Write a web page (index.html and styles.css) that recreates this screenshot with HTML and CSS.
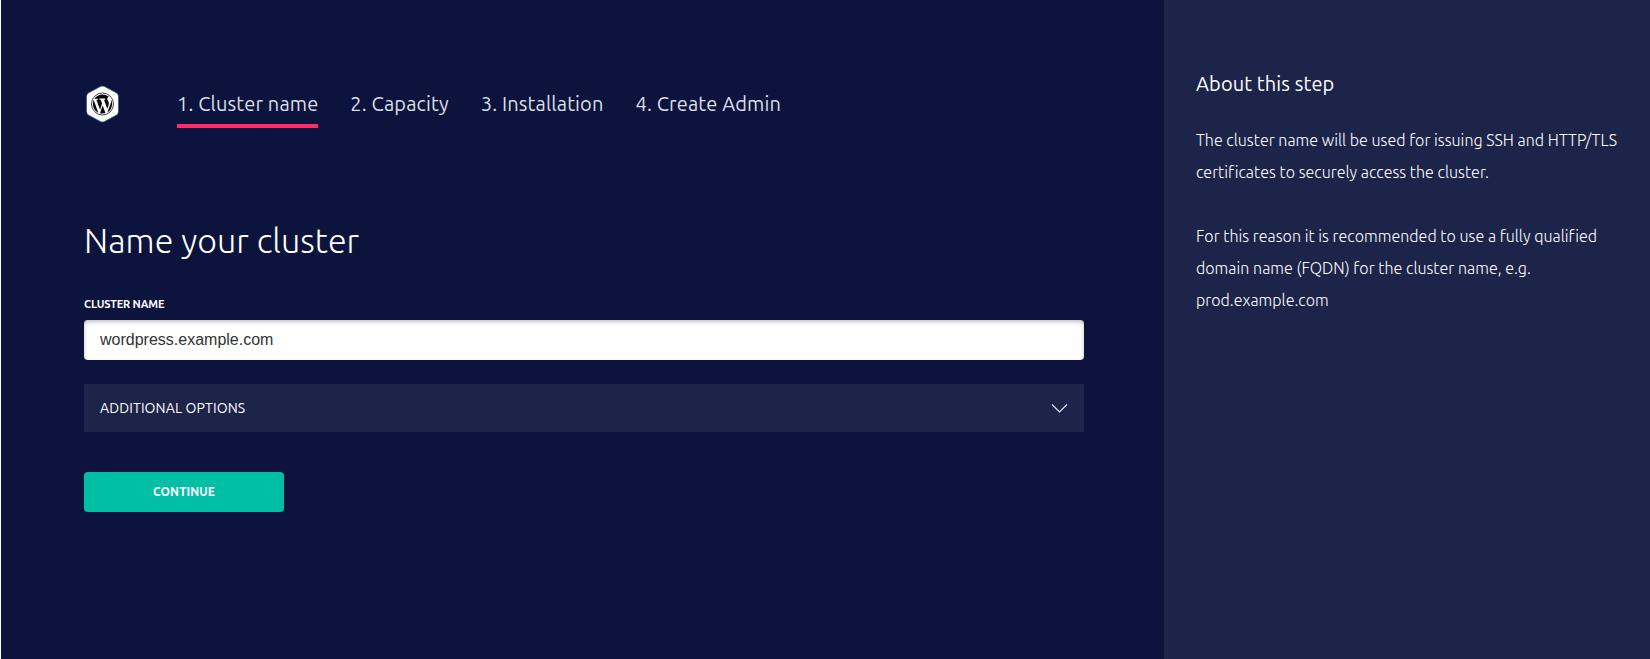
FILE: index.html
```html
<!DOCTYPE html>
<html lang="en">
<head>
<meta charset="utf-8">
<title>Name your cluster</title>
<link rel="stylesheet" href="styles.css">
</head>
<body>
<div class="installer">
  <main class="content">
    <header class="header">
      <svg class="logo" width="37" height="38" viewBox="0 0 37 38">
        <g transform="translate(.5 0)">
          <path class="logo-hex" d="M15.8 1.6Q18 .4 20.2 1.6L31.8 7.8Q34 9.1 34 11.5V26.5Q34 28.9 31.8 30.2L20.2 36.4Q18 37.6 15.8 36.4L4.2 30.2Q2 28.9 2 26.5V11.5Q2 9.1 4.2 7.8Z"/>
          <circle class="logo-ring" cx="18" cy="19" r="11"/>
          <g class="logo-mark" transform="translate(7.2 8.2) scale(1.08)">
            <path d="M7.78 15.37L4.37 6.22c.55-.02 1.17-.08 1.17-.08.5-.06.44-1.13-.06-1.11 0 0-1.45.11-2.37.11-.18 0-.37 0-.58-.01C4.12 2.69 6.87 1.11 10 1.11c2.33 0 4.45.87 6.05 2.34-.68-.11-1.65.39-1.65 1.58 0 .74.45 1.36.9 2.1.35.61.55 1.36.55 2.46 0 1.49-1.4 5-1.4 5l-3.03-8.37c.54-.02.82-.17.82-.17.5-.05.44-1.25-.06-1.22 0 0-1.44.12-2.38.12-.87 0-2.33-.12-2.33-.12-.5-.03-.56 1.2-.06 1.22l.92.08 1.26 3.41z"/>
            <path d="M17.41 10c.24-.64.74-1.87.43-4.25.7 1.29 1.05 2.71 1.05 4.25 0 3.29-1.73 6.24-4.4 7.78.97-2.59 1.94-5.2 2.92-7.78z"/>
            <path d="M6.1 18.09C3.12 16.65 1.11 13.53 1.11 10c0-1.3.23-2.48.72-3.59C3.25 10.3 4.67 14.2 6.1 18.09z"/>
            <path d="M10.13 11.46l2.58 6.98c-.86.29-1.76.45-2.71.45-.79 0-1.57-.11-2.29-.33.81-2.38 1.62-4.74 2.42-7.1z"/>
          </g>
        </g>
      </svg>
      <nav class="steps">
        <span class="step active">1. Cluster name</span>
        <span class="step">2. Capacity</span>
        <span class="step">3. Installation</span>
        <span class="step">4. Create Admin</span>
      </nav>
    </header>
    <h1 class="title">Name your cluster</h1>
    <label class="label" for="cluster">Cluster name</label>
    <input class="input" id="cluster" type="text" value="wordpress.example.com">
    <div class="options">
      <span class="options-text">Additional options</span>
      <svg class="chevron" width="18" height="10" viewBox="0 0 18 10"><path d="M2 1.5L9.5 9 17 1.5"/></svg>
    </div>
    <button class="button" type="button">Continue</button>
  </main>
  <aside class="about">
    <h2 class="about-title">About this step</h2>
    <p class="about-text">The cluster name will be used for issuing SSH and HTTP/TLS<br>certificates to securely access the cluster.</p>
    <p class="about-text">For this reason it is recommended to use a fully qualified<br>domain name (FQDN) for the cluster name, e.g.<br>prod.example.com</p>
  </aside>
</div>
</body>
</html>
```
FILE: styles.css
```css
* { box-sizing: border-box; }
body {
  margin: 0;
  background: #0c143d;
  color: #fff;
  font-family: Ubuntu, "Noto Sans", "Open Sans", sans-serif;
}
.installer {
  display: flex;
  height: 659px;
  border-left: 1px solid #fff;
  overflow: hidden;
}
.content {
  flex: 1;
  padding: 80px 80px 0 83px;
}
.header { display: flex; height: 48px; }
.logo { margin: 5px 56px 0 0; flex: none; }
.logo-hex { fill: #fff; stroke: #1d5578; stroke-width: .7; }
.logo-ring { fill: none; stroke: #111; stroke-width: .8; }
.logo-mark { fill: #0a0a0a; }
.steps { display: flex; gap: 32px; }
.step {
  height: 48px;
  line-height: 48px;
  font-size: 20px;
  letter-spacing: .13px;
  color: #dcdee6;
  white-space: nowrap;
}
.active { border-bottom: 4px solid #ff2c68; }
.title {
  margin: 87px 0 0;
  height: 50px;
  line-height: 50px;
  font-size: 34px;
  font-weight: 300;
  letter-spacing: .06px;
  white-space: nowrap;
}
.label {
  display: block;
  margin-top: 31px;
  height: 16px;
  line-height: 16px;
  font-size: 11px;
  font-weight: 600;
  letter-spacing: -.14px;
  text-transform: uppercase;
}
.input {
  display: block;
  width: 100%;
  height: 40px;
  margin-top: 8px;
  padding: 0 16px;
  border: 0;
  border-radius: 4px;
  background: #fff;
  box-shadow: inset 0 2px 4px rgba(0, 0, 0, .24);
  color: #333;
  font: 16px "Liberation Sans", Arial, sans-serif;
}
.options {
  display: flex;
  align-items: center;
  justify-content: space-between;
  height: 48px;
  margin-top: 24px;
  padding: 0 16px;
  background: #1c244a;
  font-size: 14px;
  letter-spacing: .13px;
  text-transform: uppercase;
}
.chevron { fill: none; stroke: #e4e6ee; stroke-width: 1.1; }
.button {
  display: block;
  width: 200px;
  height: 40px;
  margin-top: 40px;
  padding: 0;
  border: 0;
  border-radius: 4px;
  background: #00bfa5;
  color: #fff;
  font: 600 12px/40px Ubuntu, "Noto Sans", sans-serif;
  letter-spacing: .1px;
  text-transform: uppercase;
}
.about {
  width: 486px;
  padding: 64px 32px 0;
  background: #1c244a;
}
.about-title {
  margin: 0;
  height: 40px;
  line-height: 40px;
  font-size: 20px;
  font-weight: 400;
  letter-spacing: .1px;
}
.about-text {
  margin: 20px 0 32px;
  line-height: 32px;
  font-size: 16px;
  font-weight: 300;
  letter-spacing: .03px;
  white-space: nowrap;
}
.about-text + .about-text { margin-top: 0; }
```
